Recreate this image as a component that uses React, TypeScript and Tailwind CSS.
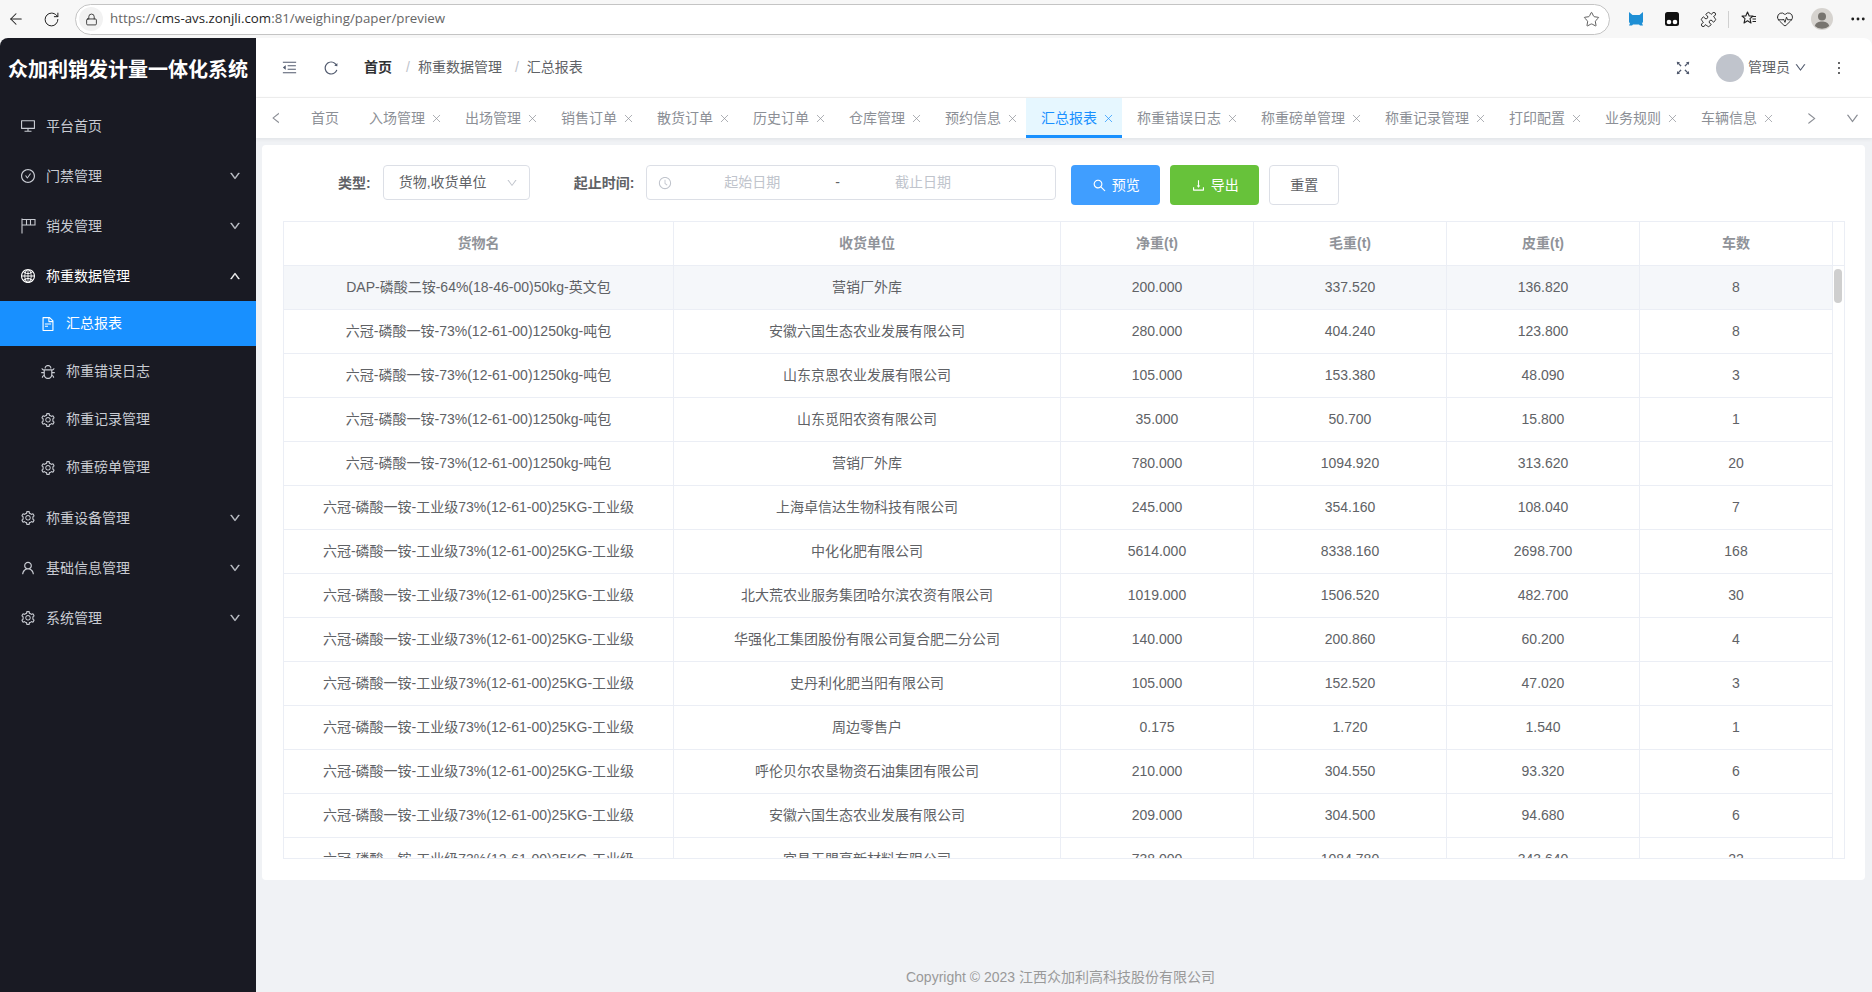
import { ReactNode } from "react";
import {
  AiOutlineBug,
  AiOutlineCheckCircle,
  AiOutlineClockCircle,
  AiOutlineDesktop,
  AiOutlineDown,
  AiOutlineDownload,
  AiOutlineFileText,
  AiOutlineFullscreen,
  AiOutlineGlobal,
  AiOutlineLeft,
  AiOutlineMenuFold,
  AiOutlineMore,
  AiOutlineReload,
  AiOutlineRight,
  AiOutlineSearch,
  AiOutlineSetting,
  AiOutlineUp,
  AiOutlineUser,
} from "react-icons/ai";
import { ArrowLeft, Ellipsis, HeartPulse, Lock, Puzzle, RotateCw, Star, X } from "lucide-react";

const tabs = [
  "入场管理",
  "出场管理",
  "销售订单",
  "散货订单",
  "历史订单",
  "仓库管理",
  "预约信息",
  "汇总报表",
  "称重错误日志",
  "称重磅单管理",
  "称重记录管理",
  "打印配置",
  "业务规则",
  "车辆信息",
];

const P1 = "六冠-磷酸一铵-73%(12-61-00)1250kg-吨包";
const P2 = "六冠-磷酸一铵-工业级73%(12-61-00)25KG-工业级";

const rows = [
  ["DAP-磷酸二铵-64%(18-46-00)50kg-英文包", "营销厂外库", "200.000", "337.520", "136.820", "8"],
  [P1, "安徽六国生态农业发展有限公司", "280.000", "404.240", "123.800", "8"],
  [P1, "山东京恩农业发展有限公司", "105.000", "153.380", "48.090", "3"],
  [P1, "山东觅阳农资有限公司", "35.000", "50.700", "15.800", "1"],
  [P1, "营销厂外库", "780.000", "1094.920", "313.620", "20"],
  [P2, "上海卓信达生物科技有限公司", "245.000", "354.160", "108.040", "7"],
  [P2, "中化化肥有限公司", "5614.000", "8338.160", "2698.700", "168"],
  [P2, "北大荒农业服务集团哈尔滨农资有限公司", "1019.000", "1506.520", "482.700", "30"],
  [P2, "华强化工集团股份有限公司复合肥二分公司", "140.000", "200.860", "60.200", "4"],
  [P2, "史丹利化肥当阳有限公司", "105.000", "152.520", "47.020", "3"],
  [P2, "周边零售户", "0.175", "1.720", "1.540", "1"],
  [P2, "呼伦贝尔农垦物资石油集团有限公司", "210.000", "304.550", "93.320", "6"],
  [P2, "安徽六国生态农业发展有限公司", "209.000", "304.500", "94.680", "6"],
  [P2, "宜昌天盟高新材料有限公司", "738.000", "1084.780", "343.640", "22"],
];

const cols = "grid grid-cols-[390px_387px_193px_193px_193px_193px]";

function FlagIcon() {
  return (
    <svg viewBox="0 0 16 16" className="h-[16px] w-[16px]" fill="none" stroke="currentColor" strokeWidth="1.1">
      <path d="M2 .5v15M2 1.500h13v5.500H2M6.500 1.500v5.500M10.500 1.500v5.500" />
    </svg>
  );
}

function MenuItem({ icon, label, arrow, bright }: { icon: ReactNode; label: string; arrow?: "up" | "down"; bright?: boolean }) {
  return (
    <div className={`flex h-[50px] items-center pl-[20px] pr-[15px] text-[14px] ${bright ? "text-white" : "text-[#c8cbd2]"}`}>
      <span className="flex w-[16px] justify-center text-[18px]">{icon}</span>
      <span className="ml-[10px] flex-1">{label}</span>
      {arrow === "down" && <AiOutlineDown className="text-[12px] stroke-[40]" />}
      {arrow === "up" && <AiOutlineUp className="text-[12px] stroke-[40]" />}
    </div>
  );
}

function SubItem({ icon, label, active }: { icon: ReactNode; label: string; active?: boolean }) {
  return (
    <div className={`mb-[3px] flex h-[45px] items-center pl-[40px] text-[14px] ${active ? "bg-[#1890ff] text-white" : "text-[#c8cbd2]"}`}>
      <span className="flex w-[16px] justify-center text-[18px]">{icon}</span>
      <span className="ml-[10px]">{label}</span>
    </div>
  );
}

function BrowserBar() {
  return (
    <div className="flex h-[38px] items-center bg-[#f7f7f7] text-[#1f1f1f]">
      <ArrowLeft className="ml-[7px] h-[18px] w-[18px]" strokeWidth={1.4} />
      <RotateCw className="ml-[18px] h-[17px] w-[17px]" strokeWidth={1.4} />
      <div className="ml-[15px] flex h-[31px] w-[1535px] items-center rounded-full border border-[#c4c4c4] bg-white">
        <span className="ml-[3px] flex h-[24px] w-[24px] items-center justify-center rounded-full bg-[#f2f2f2]">
          <Lock className="h-[13px] w-[13px]" strokeWidth={1.5} />
        </span>
        <span className="ml-[7px] pb-[1px] font-['Open_Sans',sans-serif] text-[13.3px] text-[#666]">
          https://<span className="text-[#1f1f1f]">cms-avs.zonjli.com</span>:81/weighing/paper/preview
        </span>
        <Star className="ml-auto mr-[9px] h-[17px] w-[17px] text-[#444]" strokeWidth={1.2} />
      </div>
      <svg viewBox="0 0 16 16" className="ml-[18px] h-[16px] w-[16px]">
        <path d="M1 1l3.500 3h7L15 1v9.500c0 .8-.6 1.500-1 1.800l1 2.200h-3l-1-1H5l-1 1H1l1-2.200c-.5-.3-1-1-1-1.800z" fill="#1e8fd5" />
      </svg>
      <svg viewBox="0 0 16 16" className="ml-[20px] h-[16px] w-[16px]">
        <rect x="1" y="1" width="14" height="14" rx="2.500" fill="#111" />
        <circle cx="5" cy="11" r="2.300" fill="#fff" />
        <circle cx="11" cy="11" r="2.300" fill="#fff" />
      </svg>
      <Puzzle className="ml-[20px] h-[17px] w-[17px]" strokeWidth={1.3} />
      <span className="ml-[11px] h-[17px] w-px bg-[#d0d0d0]" />
      <svg viewBox="0 0 18 18" className="ml-[11px] h-[18px] w-[18px]" fill="none" stroke="#222" strokeWidth="1.1">
        <path d="M7.500 2l1.700 4H13l-3 2.600 1 4.400-3.500-2.300L4 13l1-4.400L2 6h3.800z" strokeLinejoin="round" />
        <path d="M12 6.500h4M12.500 9h3.500M12.500 11.500h3.500" />
      </svg>
      <HeartPulse className="ml-[18px] h-[18px] w-[18px]" strokeWidth={1.2} />
      <svg viewBox="0 0 22 22" className="ml-[17px] h-[22px] w-[22px]">
        <circle cx="11" cy="11" r="11" fill="#d6d3cf" />
        <circle cx="11" cy="8.500" r="4" fill="#77746f" />
        <path d="M3.800 18c1-3.600 4-4.600 7.200-4.600s6.200 1 7.200 4.600A10.500 10.500 0 0 1 3.800 18z" fill="#77746f" />
      </svg>
      <Ellipsis className="ml-[16px] h-[18px] w-[18px]" strokeWidth={1.8} />
    </div>
  );
}

function Sidebar() {
  return (
    <aside className="flex h-full w-[256px] shrink-0 flex-col bg-[#191a23]">
      <div className="flex h-[63px] items-center justify-center text-[20px] font-bold text-white">众加利销发计量一体化系统</div>
      <MenuItem icon={<AiOutlineDesktop />} label="平台首页" />
      <MenuItem icon={<AiOutlineCheckCircle />} label="门禁管理" arrow="down" />
      <MenuItem icon={<FlagIcon />} label="销发管理" arrow="down" />
      <MenuItem icon={<AiOutlineGlobal />} label="称重数据管理" arrow="up" bright />
      <SubItem icon={<AiOutlineFileText />} label="汇总报表" active />
      <SubItem icon={<AiOutlineBug />} label="称重错误日志" />
      <SubItem icon={<AiOutlineSetting />} label="称重记录管理" />
      <SubItem icon={<AiOutlineSetting />} label="称重磅单管理" />
      <MenuItem icon={<AiOutlineSetting />} label="称重设备管理" arrow="down" />
      <MenuItem icon={<AiOutlineUser />} label="基础信息管理" arrow="down" />
      <MenuItem icon={<AiOutlineSetting />} label="系统管理" arrow="down" />
    </aside>
  );
}

function TopHeader() {
  return (
    <div className="flex h-[60px] items-center border-b border-[#f0f0f0] bg-white text-[14px]">
      <AiOutlineMenuFold className="ml-[25px] text-[17px] text-[#515a6e]" />
      <AiOutlineReload className="ml-[25px] text-[16px] text-[#515a6e]" />
      <span className="ml-[25px] font-bold text-[#303133]">首页</span>
      <span className="ml-[14px] text-[#c0c4cc]">/</span>
      <span className="ml-[8px] text-[#606266]">称重数据管理</span>
      <span className="ml-[13px] text-[#c0c4cc]">/</span>
      <span className="ml-[8px] text-[#606266]">汇总报表</span>
      <AiOutlineFullscreen className="ml-auto text-[18px] text-[#515a6e]" />
      <span className="ml-[24px] h-[28px] w-[28px] rounded-full bg-[#c0c4cc]" />
      <span className="ml-[4px] text-[#606266]">管理员</span>
      <AiOutlineDown className="ml-[4px] text-[13px] text-[#515a6e]" />
      <AiOutlineMore className="ml-[23px] mr-[24px] text-[18px] text-[#303133]" />
    </div>
  );
}

function TagsBar() {
  return (
    <div className="z-10 flex h-[40px] items-stretch bg-white text-[14px] text-[#8c8f96] shadow-[0_1px_4px_rgba(0,21,41,0.08)]">
      <span className="flex w-[40px] items-center justify-center">
        <AiOutlineLeft className="text-[14px]" />
      </span>
      <span className="flex items-center px-[15px]">首页</span>
      {tabs.map((t) => {
        const on = t === "汇总报表";
        return (
          <span
            key={t}
            className={`flex items-center border-b-[3px] pl-[15px] pr-[7px] pt-[3px] ${on ? "border-[#1890ff] bg-[#e6f7ff] text-[#1890ff]" : "border-transparent"}`}
          >
            {t}
            <X className="ml-[5px] h-[13px] w-[13px]" strokeWidth={1.3} />
          </span>
        );
      })}
      <span className="flex flex-1 items-center justify-end pr-[12px]">
        <AiOutlineRight className="text-[15px]" />
        <AiOutlineDown className="ml-[26px] text-[15px]" />
      </span>
    </div>
  );
}

function Filters() {
  return (
    <div className="flex items-start pl-[55px] text-[14px]">
      <span className="mt-[8px] font-bold text-[#606266]">类型:</span>
      <div className="ml-[12px] flex h-[35px] w-[147px] items-center rounded-[4px] border border-[#dcdfe6] pl-[15px] pr-[10px] text-[#606266]">
        货物,收货单位
        <AiOutlineDown className="ml-auto mr-[1px] text-[12px] text-[#c0c4cc]" />
      </div>
      <span className="ml-[44px] mt-[8px] font-bold text-[#606266]">起止时间:</span>
      <div className="ml-[12px] flex h-[35px] w-[410px] items-center rounded-[4px] border border-[#dcdfe6] pl-[11px] text-[#c0c4cc]">
        <AiOutlineClockCircle className="text-[14px]" />
        <span className="ml-[52px]">起始日期</span>
        <span className="ml-[55px] text-[#606266]">-</span>
        <span className="ml-[55px]">截止日期</span>
      </div>
      <button className="ml-[15px] flex h-[40px] w-[89px] items-center justify-center rounded-[4px] bg-[#409eff] text-white">
        <AiOutlineSearch className="mr-[5px] text-[15px]" />
        预览
      </button>
      <button className="ml-[10px] flex h-[40px] w-[89px] items-center justify-center rounded-[4px] bg-[#67c23a] text-white">
        <AiOutlineDownload className="mr-[5px] text-[15px]" />
        导出
      </button>
      <button className="ml-[10px] h-[40px] w-[70px] rounded-[4px] border border-[#dcdfe6] bg-white text-[#606266]">重置</button>
    </div>
  );
}

function DataTable() {
  return (
    <div className="mt-[16px] flex h-[638px] flex-col overflow-hidden border border-[#ebeef5] text-[14px]">
      <div className="flex h-[44px] shrink-0 border-b border-[#ebeef5]">
        <div className={`${cols} flex-1 font-bold text-[#909399]`}>
          {["货物名", "收货单位", "净重(t)", "毛重(t)", "皮重(t)", "车数"].map((h) => (
            <div key={h} className="flex items-center justify-center border-r border-[#ebeef5]">
              {h}
            </div>
          ))}
        </div>
        <div className="w-[11px]" />
      </div>
      <div className="flex min-h-0 flex-1">
        <div className="min-h-0 flex-1 overflow-hidden">
          {rows.map((r, i) => (
            <div key={i} className={`${cols} h-[44px] border-b border-[#ebeef5] text-[#606266] ${i === 0 ? "bg-[#f5f7fa]" : ""}`}>
              {r.map((c, j) => (
                <div key={j} className="flex items-center justify-center border-r border-[#ebeef5]">
                  {c}
                </div>
              ))}
            </div>
          ))}
        </div>
        <div className="w-[11px] pl-[1px] pt-[3px]">
          <div className="h-[34px] w-[8px] rounded-full bg-[#cfcfcf]" />
        </div>
      </div>
    </div>
  );
}

export default function App() {
  return (
    <div className="flex h-screen w-full flex-col overflow-hidden bg-[#f7f7f7] font-['Liberation_Sans','Noto_Sans_CJK_SC',sans-serif]">
      <BrowserBar />
      <div className="flex min-h-0 flex-1 overflow-hidden rounded-t-[8px] bg-[#f0f2f5]">
        <Sidebar />
        <main className="flex min-w-0 flex-1 flex-col">
          <TopHeader />
          <TagsBar />
          <div className="ml-[6px] mr-[7px] mt-[7px] rounded-[4px] bg-white pb-[21px] pl-[21px] pr-[20px] pt-[20px]">
            <Filters />
            <DataTable />
          </div>
          <div className="mt-[87px] pr-[7px] text-center text-[14px] text-[#999]">Copyright © 2023 江西众加利高科技股份有限公司</div>
        </main>
      </div>
    </div>
  );
}
